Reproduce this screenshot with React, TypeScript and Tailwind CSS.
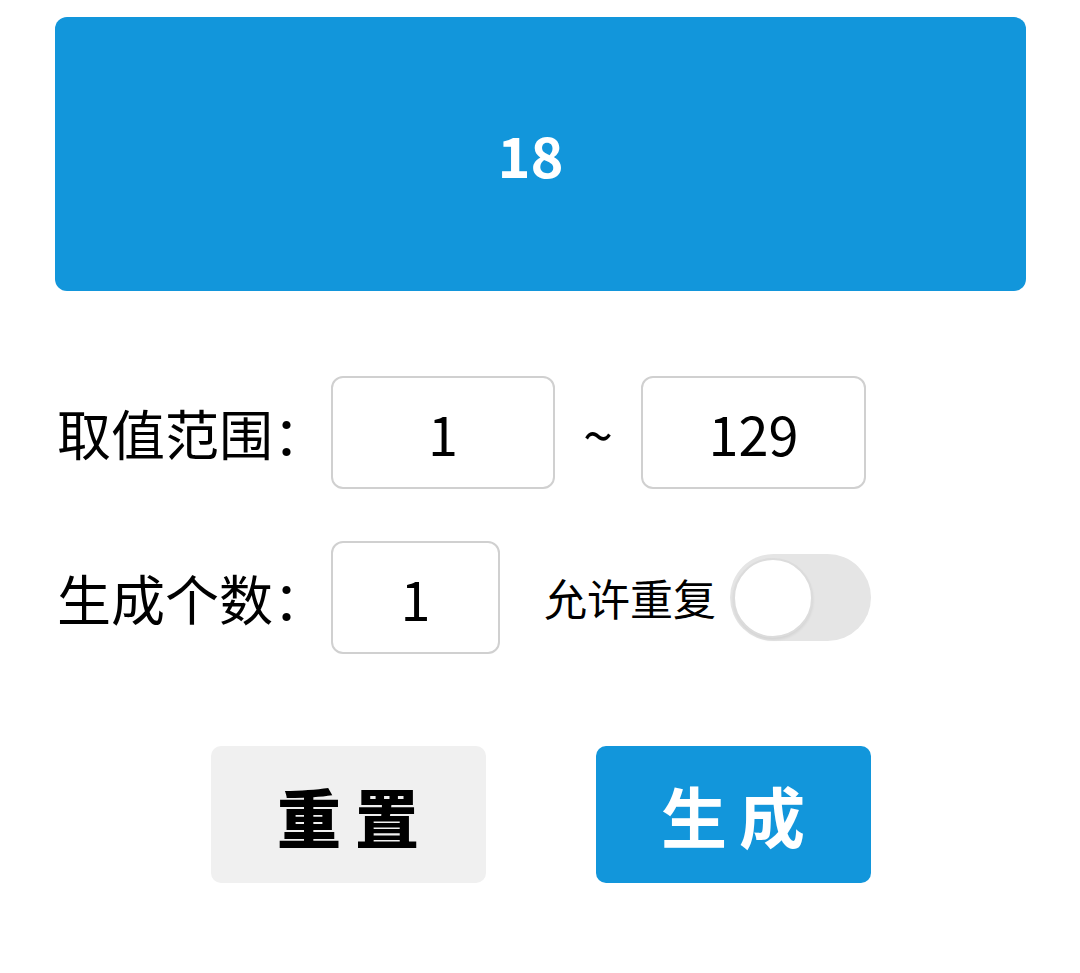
import { useState } from "react";

const FONT = "font-['Noto_Sans_CJK_SC',sans-serif]";

function Field({ value, width }: { value: string; width: string }) {
  return (
    <div className={`${width} h-[113px] border-2 border-[#d0d0d0] rounded-[12px] flex items-center justify-center text-[54px] text-black`}>
      {value}
    </div>
  );
}

export default function App() {
  const [repeat, setRepeat] = useState(false);

  return (
    <div className={`${FONT} w-[1080px] h-[973px] bg-white pt-[17px] pl-[55px]`}>
      {/* Result */}
      <div className="w-[971px] h-[274px] rounded-[12px] bg-[#1296db] flex items-center justify-center pr-[20px] text-white text-[56px] font-bold">
        18
      </div>

      {/* Range */}
      <div className="mt-[85px] flex items-center h-[113px]">
        <div className="w-[276px] pl-[2px] text-[54px] text-black leading-none">取值范围：</div>
        <Field value="1" width="w-[224px]" />
        <div className="w-[86px] text-center text-[54px] text-black leading-none">~</div>
        <Field value="129" width="w-[225px]" />
      </div>

      {/* Count */}
      <div className="mt-[52px] flex items-center h-[113px]">
        <div className="w-[276px] pl-[2px] text-[54px] text-black leading-none">生成个数：</div>
        <Field value="1" width="w-[169px]" />
        <div className="ml-[44px] text-[43px] text-black leading-none">允许重复</div>
        <button
          onClick={() => setRepeat(!repeat)}
          className={`ml-[14px] w-[141px] h-[87px] rounded-full p-[3px] flex items-center ${repeat ? "bg-[#1296db] justify-end" : "bg-[#e5e5e5] justify-start"}`}
        >
          <span className="w-[80px] h-[80px] rounded-full bg-white border-2 border-[#dcdcdc] shadow-[0_2px_3px_rgba(0,0,0,0.08)]" />
        </button>
      </div>

      {/* Actions */}
      <div className="mt-[92px] w-[971px] flex justify-center gap-[110px]">
        <button className="w-[275px] h-[137px] rounded-[10px] bg-[#f0f0f0] text-black text-[64px] font-black tracking-[14px] pl-[14px] flex items-center justify-center">
          重置
        </button>
        <button className="w-[275px] h-[137px] rounded-[10px] bg-[#1296db] text-white text-[66px] font-bold tracking-[12px] pl-[12px] flex items-center justify-center">
          生成
        </button>
      </div>
    </div>
  );
}
